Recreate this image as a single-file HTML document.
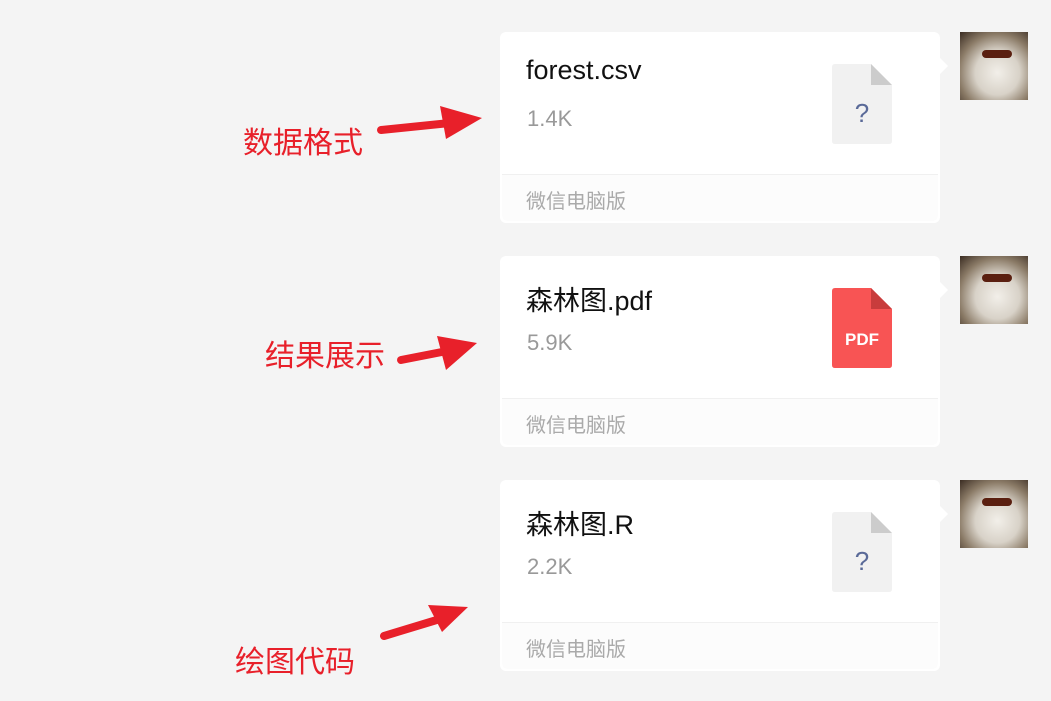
<!DOCTYPE html>
<html><head><meta charset="utf-8"><style>
body{margin:0;width:1051px;height:701px;background:#f4f4f4;position:relative;overflow:hidden;font-family:"Liberation Sans","Noto Sans CJK SC",sans-serif}
.card{position:absolute;left:500px;width:440px;height:191px;background:#fff;border-radius:6px}
.card:after{content:"";position:absolute;right:-8px;top:26px;border:8px solid transparent;border-left-color:#fff;border-right:0}
.name{position:absolute;left:26px;top:23px;font-size:27px;color:#111}
.size{position:absolute;left:27px;top:74px;font-size:22px;color:#999}
.foot{position:absolute;left:2px;right:2px;bottom:2px;height:46px;border-top:1px solid #f0f0f0;background:#fcfcfc;border-radius:0 0 6px 6px}
.foot span{position:absolute;left:24px;top:10px;font-size:20px;color:#aaa}
.ic{position:absolute;left:332px;top:32px}
.av{position:absolute;left:960px;width:68px;height:68px;background:radial-gradient(circle at 55% 60%,#f2efe9 0,#d8d2c8 40%,#8a7a66 70%,#3a2c22 100%)}
.av:before{content:"";position:absolute;left:22px;top:18px;width:30px;height:8px;background:#5a1f10;border-radius:4px}
.lbl{position:absolute;font-size:30px;color:#e8202a}
</style></head><body>
<div class="card" style="top:32px"><div class="name">forest.csv</div><div class="size">1.4K</div>
<svg class="ic" width="60" height="80"><path d="M0 3Q0 0 3 0H39L60 21V77Q60 80 57 80H3Q0 80 0 77Z" fill="#f1f1f1"/><path d="M39 0L60 21H39Z" fill="#ccc"/><text x="30" y="58" font-size="26" fill="#5a6a98" text-anchor="middle" font-family="Liberation Sans">?</text></svg>
<div class="foot"><span>微信电脑版</span></div></div>
<div class="card" style="top:256px"><div class="name">森林图.pdf</div><div class="size">5.9K</div>
<svg class="ic" width="60" height="80"><path d="M0 3Q0 0 3 0H39L60 21V77Q60 80 57 80H3Q0 80 0 77Z" fill="#f85454"/><path d="M39 0L60 21H39Z" fill="#c83c3c"/><text x="30" y="57" font-size="17" font-weight="bold" fill="#fff" text-anchor="middle" font-family="Liberation Sans">PDF</text></svg>
<div class="foot"><span>微信电脑版</span></div></div>
<div class="card" style="top:480px"><div class="name">森林图.R</div><div class="size">2.2K</div>
<svg class="ic" width="60" height="80"><path d="M0 3Q0 0 3 0H39L60 21V77Q60 80 57 80H3Q0 80 0 77Z" fill="#f1f1f1"/><path d="M39 0L60 21H39Z" fill="#ccc"/><text x="30" y="58" font-size="26" fill="#5a6a98" text-anchor="middle" font-family="Liberation Sans">?</text></svg>
<div class="foot"><span>微信电脑版</span></div></div>
<div class="av" style="top:32px"></div><div class="av" style="top:256px"></div><div class="av" style="top:480px"></div>
<div class="lbl" style="left:243px;top:118px">数据格式</div>
<div class="lbl" style="left:265px;top:331px">结果展示</div>
<div class="lbl" style="left:235px;top:637px">绘图代码</div>
<svg width="1051" height="701" style="position:absolute;left:0;top:0">
<g fill="#e8202a" stroke="#e8202a" stroke-linecap="round">
<line x1="381" y1="130" x2="450" y2="123" stroke-width="8"/><path d="M440 106L482 118L446 139Z" stroke="none"/>
<line x1="401" y1="360" x2="447" y2="351" stroke-width="8"/><path d="M437 336L477 343L446 370Z" stroke="none"/>
<line x1="384" y1="636" x2="440" y2="619" stroke-width="8"/><path d="M428 605L468 607L442 632Z" stroke="none"/>
</g></svg>
</body></html>
